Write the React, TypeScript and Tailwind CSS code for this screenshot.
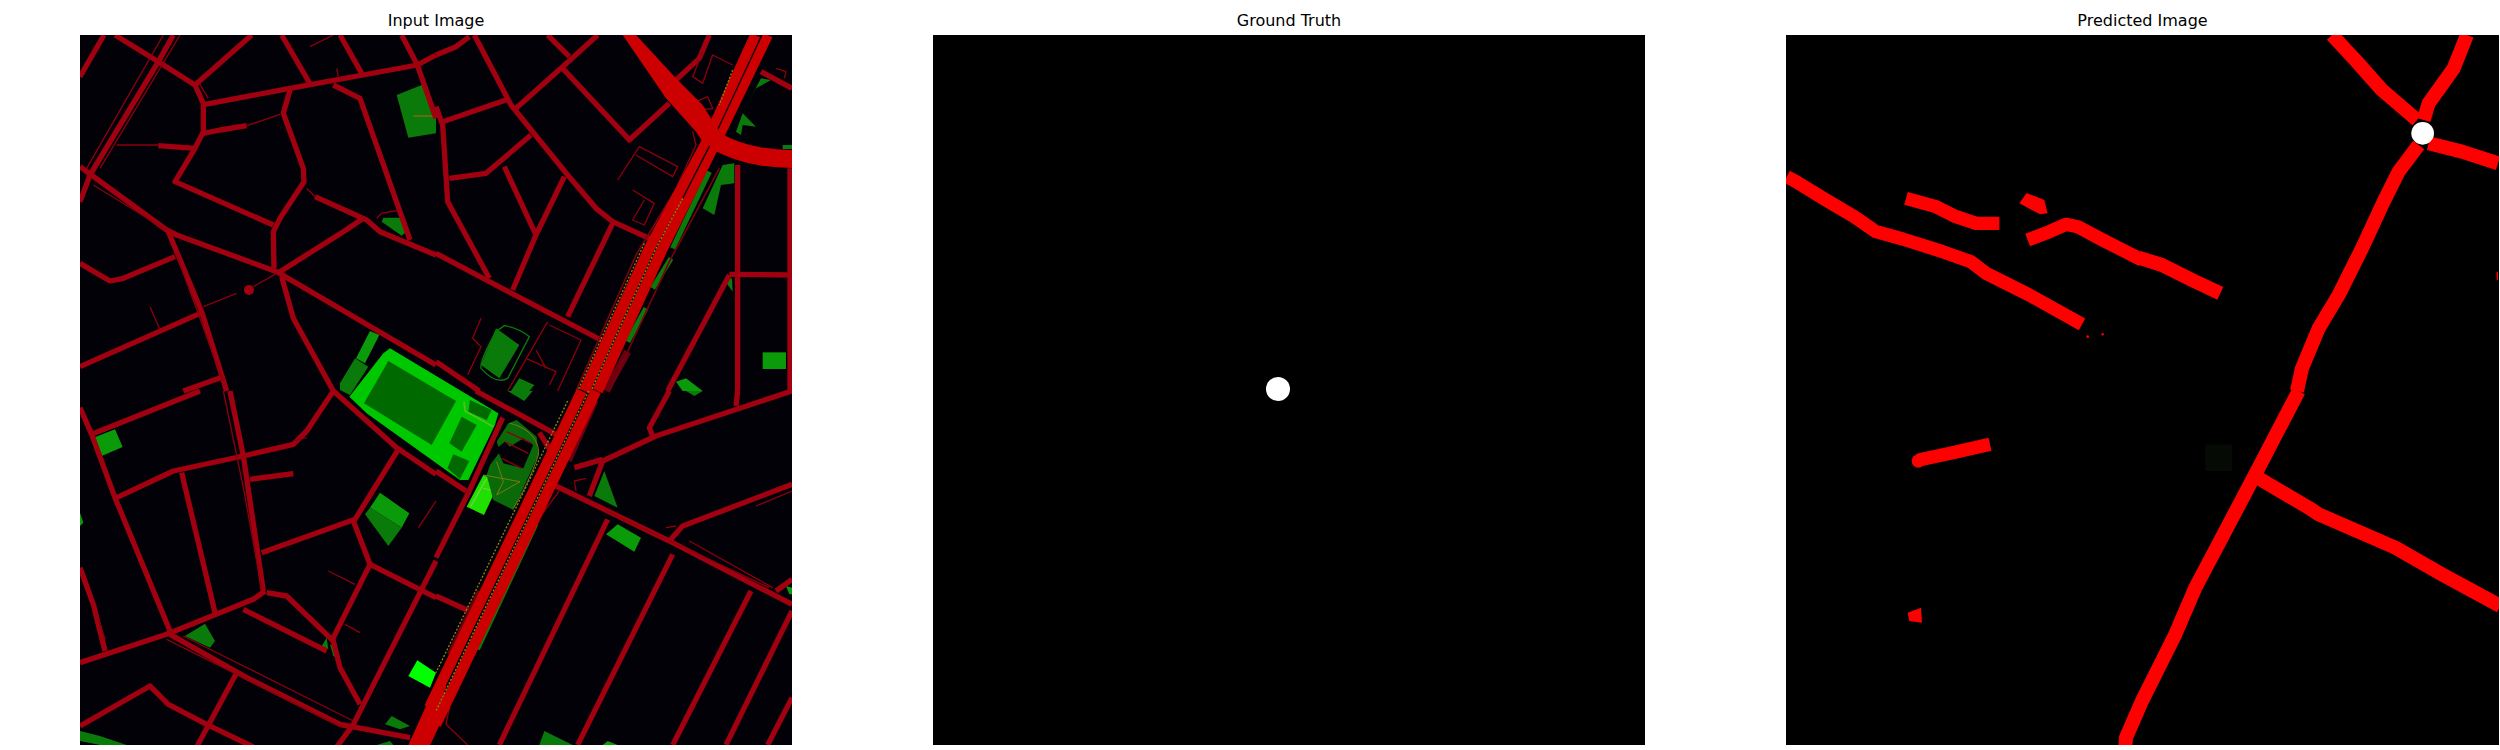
import React from 'react';

const ROAD = '#a0000f';
const THIN = '#8a000e';
const HIGHWAY = '#cc0000';
const MAP_BG = '#010107';
const OLIVE = '#7f8a12';

// each quadrant of the map is traced at 3x, so the groups scale down by a third
const QUADS = {
  q1: 'scale(0.33333)',
  q2: 'translate(356 0) scale(0.33333)',
  q3: 'translate(0 356) scale(0.33333)',
  q4: 'translate(356 356) scale(0.33333)',
};

function Lines({ d, color, width, dash }: { d: string[]; color: string; width: number; dash?: string }) {
  return (
    <g fill="none" stroke={color} strokeWidth={width} strokeLinejoin="round" strokeDasharray={dash}>
      {d.map((p) => (
        <path key={p} d={p} />
      ))}
    </g>
  );
}

function Polys({ points, color }: { points: string[]; color: string }) {
  return (
    <g fill={color}>
      {points.map((p) => (
        <polygon key={p} points={p} />
      ))}
    </g>
  );
}

function InputMap() {
  return (
    <svg viewBox="0 0 712 710" className="block w-[712px] h-[710px]">
      <rect width="712" height="710" fill={MAP_BG} />

      {/* top left */}
      <g transform={QUADS.q1}>
        <Polys color="#0a7a0a" points={['950,180 1025,150 1068,240 1068,295 985,308', '905,560 910,548 960,548 978,592 965,602']} />
        <Lines color="#8a6a10" width={4} d={['M1000 243 L1068 243']} />
        <Lines
          color={ROAD}
          width={16}
          d={[
            'M0 125 L72 0',
            'M105 0 L235 80 L345 150 L370 205 L370 290 L345 340 L285 440 L580 570',
            'M345 150 L515 0',
            'M605 0 L692 150',
            'M780 0 L845 115',
            'M965 0 L1012 90 L1068 250',
            'M375 208 L630 160 L1012 90 L1068 60',
            'M630 165 L610 235 L670 400 L672 440 L600 550 L580 590 L582 700',
            'M370 295 L420 285 L500 272',
            'M760 150 L840 190 L990 615',
            'M235 332 L345 340',
            'M280 0 L235 80 L30 420 L0 500',
            'M0 395 L260 585 L290 600 L590 710 L1068 990',
            'M265 590 L365 830 L440 1068',
            'M0 685 L90 738 L130 730 L285 665',
            'M0 995 L360 835',
            'M705 485 L860 555 L900 590 L1068 660',
            'M600 710 L790 590 L850 550',
            'M605 725 L640 850 L760 1068',
            'M310 1068 L430 1025',
          ]}
        />
        <Lines
          color={THIN}
          width={4}
          d={[
            'M500 272 L600 238',
            'M110 330 L235 330',
            'M300 0 L60 400',
            'M250 0 L20 400',
            'M40 450 L260 585',
            'M290 660 L430 1040',
            'M370 815 L470 775',
            'M520 755 L590 715',
            'M680 460 L705 485',
            'M890 550 L905 535 L960 525',
            'M210 815 L238 880',
            'M690 35 L760 0',
            'M770 100 L775 125',
            'M355 140 L385 190',
          ]}
        />
        <circle cx="507" cy="765" r="15" fill={ROAD} />
      </g>

      {/* top right */}
      <g transform={QUADS.q2}>
        <Polys
          color="#0a7a0a"
          points={[
            '800,520 860,390 895,385 895,445 855,450 835,540',
            '930,215 975,130 1005,135 960,160',
            '900,290 920,235 960,275 920,270 915,300',
            '865,735 888,730 890,770',
            '1040,330 1068,330 1068,342 1040,342',
            '180,880 250,930 190,1030 135,990',
            '225,1068 250,1030 295,1050 280,1068',
          ]}
        />
        <Polys color="#0a9a0a" points={['980,952 1050,952 1050,1002 980,1002', '720,1040 750,1030 800,1068 740,1068']} />
        <Lines color="#0a7a0a" width={16} d={['M710 640 L820 410', 'M650 760 L705 670', 'M575 920 L630 820']} />
        <Lines color="#0a7a0a" width={4} d={['M205 872 Q250 880 280 905 L215 1030 Q180 1050 135 1000 Q130 980 180 890 Z']} />
        <Lines
          color={ROAD}
          width={16}
          d={[
            'M0 60 L60 35 L100 5',
            'M115 0 L225 210 L395 420 L480 520 L530 560 L650 615',
            'M335 0 L400 65',
            'M240 220 L380 95 L485 0',
            'M380 100 L585 320',
            'M580 315 L700 205',
            'M20 260 L210 195',
            'M0 215 L20 270 L35 500 L160 730',
            'M40 430 L150 415 L285 300',
            'M205 395 L300 600',
            'M385 425 L300 600 L230 765',
            'M530 565 L395 845',
            'M0 655 L160 740 L495 915',
            'M905 390 L905 1068',
            'M880 718 L1068 720',
            'M1062 400 L1062 1068',
            'M880 720 L695 1068',
            'M975 110 L1068 160',
            'M820 0 L790 70 L720 135',
            'M0 980 L130 1068',
          ]}
        />
        <Lines
          color={THIN}
          width={4}
          d={[
            'M545 435 L610 335 L725 395 L710 425 L600 360',
            'M590 465 L655 505 L625 570 L590 555 L625 495',
            'M800 50 L770 125 L800 145 L830 60 L890 90',
            'M1020 100 L1050 110 L1045 130',
            'M780 200 L815 185 L830 220 L795 225 Z',
            'M335 860 L215 1068',
            'M340 870 L435 915 L365 1068',
            'M135 850 L110 910 L135 935 L95 1020',
            'M270 970 L360 1010 L340 1050',
            'M300 945 L330 1000',
            'M770 290 L780 330 L660 590',
          ]}
        />
        <Lines color="#6a0010" width={22} d={['M575 950 L510 1068']} />
        <Lines color="#7a0010" width={5} d={['M770 380 L600 660 L420 1068', 'M850 400 L700 680 L520 1068']} />
        <Lines
          color={HIGHWAY}
          width={32}
          d={['M958 0 L815 315 L640 640 L445 1068', 'M995 0 L850 300 L680 640 L485 1068']}
        />
        <Lines color="#0b0208" width={4} d={['M978 0 L835 305 L740 490']} />
        <Lines color={OLIVE} width={4} dash="6 5" d={['M740 490 L660 640 L465 1068', 'M890 105 L850 210', 'M625 625 L425 1068']} />
        <Polys color={HIGHWAY} points={['560,0 600,0 720,130 800,210 850,290 860,325 810,335 780,290 690,190']} />
        <Lines color={HIGHWAY} width={54} d={['M835 315 Q930 372 1068 372']} />
      </g>

      {/* bottom left */}
      <g transform={QUADS.q3}>
        <Polys
          color="#0a9a0a"
          points={['40,140 105,115 128,168 65,195', '870,350 900,305 988,367 965,410', '0,365 10,395 0,405']}
        />
        <Polys
          color="#0a7a0a"
          points={[
            '855,370 870,350 965,410 925,465',
            '315,735 375,698 405,750 390,770',
            '725,765 740,740 745,775',
            '750,760 770,770 780,805 760,795',
            '915,1000 935,975 990,1005 960,1015',
            '890,1062 930,1050 940,1062',
            '0,1020 60,1035 140,1062 60,1062 0,1050',
          ]}
        />
        <Polys color="#00ff00" points={['985,855 1012,808 1068,845 1050,890']} />
        <Lines
          color={ROAD}
          width={16}
          d={[
            'M35 130 L360 0',
            'M0 50 L35 130 L105 320 L270 720',
            'M450 0 L490 195 L550 600',
            'M110 320 L280 240 L490 195 L640 160 L680 120 L760 0',
            'M305 245 L405 665',
            'M510 265 L640 248',
            'M760 0 L950 170 L1068 250',
            'M955 175 L825 385 L545 485',
            'M820 390 L870 520 L755 750',
            'M870 520 L1068 620',
            'M560 605 L620 615 L760 750 L780 830 L840 940',
            'M0 530 L40 640 L75 780',
            'M0 815 L260 730 L520 625 L555 600',
            'M490 655 L740 780',
            'M270 730 L500 860 L780 1000 L990 1040',
            'M1068 510 L820 1000 L770 1068',
            'M0 1005 L210 885 L265 940 L380 1000 L520 1068',
            'M470 845 L350 1068',
          ]}
        />
        <Lines
          color={THIN}
          width={4}
          d={[
            'M430 0 L490 290 L545 590',
            'M260 745 L790 1010',
            'M310 735 L820 990',
            'M745 540 L825 580',
            'M795 700 L840 725',
            'M1015 410 L1068 330',
            'M55 685 L75 745',
            'M640 150 L680 140',
          ]}
        />
        <Lines color={HIGHWAY} width={32} d={['M1085 880 L1000 1068', 'M1105 910 L1030 1068']} />
      </g>

      {/* bottom right */}
      <g transform={QUADS.q4}>
        <Polys
          color="#0a7a0a"
          points={['475,315 505,240 545,350', '310,1062 325,1020 410,1062', '215,0 290,0 265,30', '750,0 800,0 775,15']}
        />
        <Polys color="#0a9a0a" points={['510,430 545,400 615,440 595,482', '1050,585 1068,590 1068,610 1060,610', '500,1062 515,1050 545,1062']} />
        <Lines color="#0a7a0a" width={14} d={['M300 400 L125 775']} />
        <Lines
          color={ROAD}
          width={16}
          d={[
            'M360 285 L700 450 L1068 640',
            'M700 450 L740 405 L1068 280',
            'M515 385 L190 1062',
            'M710 490 L425 1062',
            'M945 600 L710 1062',
            'M1068 660 L870 1062',
            'M1068 920 L995 1062',
            'M1068 0 L660 135 L500 210 L460 315',
            'M700 0 L640 110 L650 135',
            'M905 0 L900 45',
            'M415 230 L500 205',
            'M1020 600 L1068 565',
            'M0 240 L90 300',
            'M200 80 L100 300 L0 500',
            'M0 615 L100 660',
            'M120 0 L360 130',
            'M310 125 L345 180 L325 240',
          ]}
        />
        <Lines
          color={THIN}
          width={4}
          d={[
            'M510 360 L1000 590',
            'M690 410 L720 405',
            'M370 300 L310 380 L50 900 L30 1000 L95 1062',
            'M420 300 L415 270 L450 262',
            'M960 345 L1068 300',
            'M760 450 L1010 590',
          ]}
        />
        <Lines color="#6a0010" width={14} d={['M480 30 L400 210', 'M130 600 L40 790']} />
        <Lines color={HIGHWAY} width={32} d={['M437 0 L-20 950', 'M480 0 L0 1000']} />
        <Lines color={OLIVE} width={4} dash="6 5" d={['M458 0 L0 960', 'M395 30 L0 845']} />
      </g>

      {/* park in the middle, traced from its own crop */}
      <g transform="translate(260 290) scale(0.33333)">
        <Polys
          color="#00c800"
          points={['28,215 130,85 150,70 475,265 465,300 385,465 360,465 310,430 80,265']}
        />
        <Polys
          color="#006a00"
          points={[
            '72,235 145,108 348,228 275,360',
            '390,225 455,255 440,285 385,260',
            '365,275 410,300 365,380 328,355',
            '340,388 388,408 360,462 322,430',
          ]}
        />
        <Polys color="#0a9a0a" points={['48,100 90,18 118,30 75,115']} />
        <Polys color="#0a7a0a" points={['0,175 45,100 85,125 30,210 0,195']} />
        <Lines color="#55c020" width={5} d={['M372 230 L375 258 L460 305']} />
        <Polys color="#20e000" points={['380,545 430,450 478,472 432,570']} />
        <Lines color="#70d040" width={4} d={['M392 545 L440 460', 'M430 490 L470 500']} />
        <Polys color="#0a6a0a" points={['440,450 450,420 480,380 470,350 505,295 530,285 590,335 595,390 520,555 460,525']} />
        <Polys color={MAP_BG} points={['470,370 495,350 510,365 550,340 580,360 550,430 490,415']} />
        <Lines color={THIN} width={4} d={['M500 320 L575 355', 'M495 350 L565 385', 'M485 400 L545 430']} />
        <Lines color="#7a7a10" width={3} d={['M510 295 C570 310 600 350 595 390 C580 440 540 520 520 550', 'M470 410 L490 470 L470 510 L540 470 L430 450']} />
      </g>
    </svg>
  );
}

function GroundTruth() {
  return (
    <svg viewBox="0 0 712 710" className="block w-[712px] h-[710px]">
      <rect width="712" height="710" fill="#000000" />
      <circle cx="345" cy="354" r="12" fill="#ffffff" />
    </svg>
  );
}

function Predicted() {
  return (
    <svg viewBox="0 0 713 710" className="block w-[713px] h-[710px]">
      <rect width="713" height="710" fill="#000000" />
      <g transform={QUADS.q1}>
        <Lines
          color="#ff0000"
          width={40}
          d={[
            'M2 425 L30 440 L120 495 L205 545 L270 590 L350 612 L470 650 L555 680 L600 715 L730 780 L888 868',
            'M360 490 L450 515 L510 545 L570 565 L640 565',
            'M725 615 L790 590 L840 568 L875 575 L950 615 L1068 675',
          ]}
        />
        <Polys color="#ff0000" points={['700,505 722,474 775,495 785,535 762,538']} />
        <circle cx="905" cy="905" r="4" fill="#ff0000" />
        <circle cx="950" cy="898" r="4" fill="#e00000" />
      </g>
      <g transform={QUADS.q2}>
        <Lines
          color="#ff0000"
          width={42}
          d={[
            'M-10 668 L60 690 L150 735 L235 775',
            'M570 0 L640 75 L720 165 L825 255',
            'M975 0 L935 100 L860 205 L845 255',
            'M830 330 L770 410 L725 500 L660 640 L590 780 L530 880 L480 1000 L465 1068',
            'M860 325 L960 350 L1068 385',
          ]}
        />
        <circle cx="842" cy="295" r="34" fill="#ffffff" />
        <rect x="1064" y="710" width="4" height="25" fill="#ff0000" />
      </g>
      <g transform={QUADS.q3}>
        <Lines color="#ff0000" width={40} d={['M395 208 L500 185 L612 160']} />
        <circle cx="397" cy="210" r="20" fill="#ff0000" />
        <Polys color="#ff0000" points={['365,665 405,650 408,695 370,690']} />
      </g>
      <g transform={QUADS.q4}>
        <Lines
          color="#ff0000"
          width={42}
          d={[
            'M470 0 L350 230 L250 420 L160 590 L100 730 L40 850 L0 930 L-48 1040 L-50 1068',
            'M350 262 L500 350 L530 370 L760 470 L900 550 L1075 645',
          ]}
        />
        <rect x="190" y="160" width="80" height="80" fill="#050a05" />
      </g>
    </svg>
  );
}

function Panel({ title, width, children }: { title: string; width: string; children: React.ReactNode }) {
  return (
    <div className={`flex flex-col ${width}`}>
      <div className="h-[35px] pt-[10px] text-center text-[16px] leading-[22px] text-black font-['DejaVu_Sans',sans-serif]">
        {title}
      </div>
      {children}
    </div>
  );
}

export default function App() {
  return (
    <div className="flex w-[2500px] h-[750px] overflow-hidden bg-white pl-[80px] gap-[141px]">
      <Panel title="Input Image" width="w-[712px]">
        <InputMap />
      </Panel>
      <Panel title="Ground Truth" width="w-[712px]">
        <GroundTruth />
      </Panel>
      <Panel title="Predicted Image" width="w-[713px]">
        <Predicted />
      </Panel>
    </div>
  );
}
